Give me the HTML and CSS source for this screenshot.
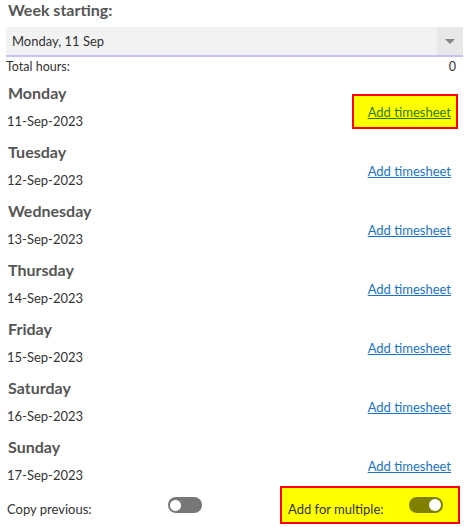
FILE: index.html
```html
<!DOCTYPE html>
<html>
<head>
<meta charset="utf-8">
<link rel="stylesheet" href="styles.css">
</head>
<body>
<div class="page">
  <div class="week-label">Week starting:</div>
  <div class="select">
    <span class="select-value">Monday, 11 Sep</span>
    <span class="select-arrow"><span class="tri"></span></span>
  </div>
  <div class="total"><span>Total hours:</span><span>0</span></div>

  <div class="day">
    <div class="day-info"><div class="day-name">Monday</div><div class="day-date">11-Sep-2023</div></div>
    <div class="link-box hl"><a href="#" class="link">Add timesheet</a></div>
  </div>
  <div class="day">
    <div class="day-info"><div class="day-name">Tuesday</div><div class="day-date">12-Sep-2023</div></div>
    <div class="link-box"><a href="#" class="link">Add timesheet</a></div>
  </div>
  <div class="day">
    <div class="day-info"><div class="day-name">Wednesday</div><div class="day-date">13-Sep-2023</div></div>
    <div class="link-box"><a href="#" class="link">Add timesheet</a></div>
  </div>
  <div class="day">
    <div class="day-info"><div class="day-name">Thursday</div><div class="day-date">14-Sep-2023</div></div>
    <div class="link-box"><a href="#" class="link">Add timesheet</a></div>
  </div>
  <div class="day">
    <div class="day-info"><div class="day-name">Friday</div><div class="day-date">15-Sep-2023</div></div>
    <div class="link-box"><a href="#" class="link">Add timesheet</a></div>
  </div>
  <div class="day">
    <div class="day-info"><div class="day-name">Saturday</div><div class="day-date">16-Sep-2023</div></div>
    <div class="link-box"><a href="#" class="link">Add timesheet</a></div>
  </div>
  <div class="day last">
    <div class="day-info"><div class="day-name">Sunday</div><div class="day-date">17-Sep-2023</div></div>
    <div class="link-box"><a href="#" class="link">Add timesheet</a></div>
  </div>

  <div class="bottom">
    <div class="copy">
      <span class="bottom-label">Copy previous:</span>
      <span class="toggle off"><span class="knob"></span></span>
    </div>
    <div class="multi">
      <span class="bottom-label">Add for multiple:</span>
      <span class="toggle on"><span class="knob"></span></span>
    </div>
  </div>
</div>
</body>
</html>
```
FILE: styles.css
```css
html, body {
  margin: 0;
  padding: 0;
  background: #fff;
}
body {
  font-family: Lato, "Open Sans", sans-serif;
  color: #333;
  font-size: 13px;
}
.page {
  width: 474px;
  box-sizing: border-box;
  padding: 0 16px 0 7px;
}
.week-label {
  font-size: 16px;
  font-weight: bold;
  color: #555;
  line-height: 20px;
  padding-left: 1px;
}
.select {
  margin: 7px -5px 0 -1px;
  height: 28px;
  background: #f2f2f2;
  border-bottom: 2px solid #c3c3f5;
  border-radius: 2px 2px 0 0;
  display: flex;
  align-items: center;
  justify-content: space-between;
}
.select-value {
  padding-left: 6px;
  color: #333;
  font-size: 13px;
}
.select-arrow {
  width: 26px;
  height: 28px;
  background: #e8e8e8;
  display: flex;
  align-items: center;
  justify-content: center;
}
.tri {
  width: 0;
  height: 0;
  border-left: 5px solid transparent;
  border-right: 5px solid transparent;
  border-top: 5px solid #888;
}
.total {
  margin-top: 2px;
  line-height: 16px;
  display: flex;
  justify-content: space-between;
  padding-right: 2px;
  font-size: 12.5px;
  margin-left: -1px;
}
.day {
  display: flex;
  justify-content: space-between;
  align-items: flex-start;
  height: 59px;
}
.total + .day { margin-top: 8px; }
.day-name {
  font-size: 16px;
  font-weight: bold;
  color: #555;
  line-height: 20px;
  padding-left: 1px;
}
.day-date {
  margin-top: 10px;
  line-height: 16px;
  font-size: 13px;
}
.link-box {
  margin-top: 11px;
  width: 106px;
  height: 35px;
  box-sizing: border-box;
  border: 2px solid transparent;
  display: flex;
  align-items: center;
  justify-content: flex-end;
  padding-right: 5px;
}
.link-box.hl {
  background: #ffff00;
  border-color: #ff0000;
}
.link {
  color: #1a73c8;
  text-decoration: underline;
  font-size: 13px;
}
.hl .link {
  color: #2d7a00;
}
.day.last {
  height: 49px;
}
.bottom {
  display: flex;
  justify-content: space-between;
  align-items: center;
  height: 38px;
  margin-right: -2px;
}
.copy {
  display: flex;
  align-items: center;
}
.copy .bottom-label {
  width: 161px;
}
.bottom-label {
  font-size: 13px;
  padding-top: 8px;
}
.multi {
  width: 180px;
  height: 38px;
  box-sizing: border-box;
  background: #ffff00;
  border: 2px solid #ff0000;
  display: flex;
  align-items: center;
  padding-left: 6px;
}
.multi .bottom-label {
  width: 121px;
  color: #333;
}
.toggle {
  width: 34px;
  height: 16px;
  border-radius: 8px;
  display: flex;
  align-items: center;
  box-sizing: border-box;
  padding: 0 2px;
}
.toggle.off {
  background: #767676;
  padding: 0 1px;
}
.toggle.on {
  background: #808000;
  justify-content: flex-end;
}
.knob {
  width: 12px;
  height: 12px;
  border-radius: 50%;
  background: #fff;
}
.toggle.off .knob {
  width: 11px;
  height: 11px;
  border: 1.5px solid #777;
}
```
